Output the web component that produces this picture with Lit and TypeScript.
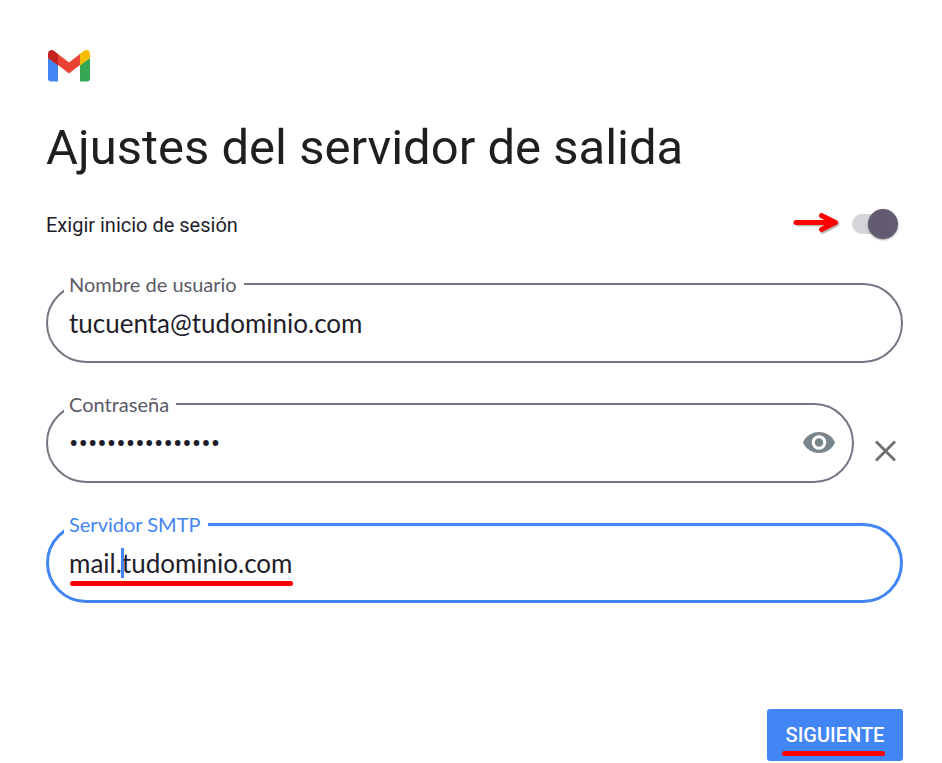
import { LitElement, html, css } from "lit";
import { customElement, property } from "lit/decorators.js";

@customElement("outlined-field")
class OutlinedField extends LitElement {
  @property() label = "";
  @property() value = "";
  @property() type = "text";
  @property({ type: Boolean, reflect: true }) active = false;

  static styles = css`
    :host {
      display: block;
      flex: 1;
      min-width: 0;
      position: relative;
    }
    .box {
      box-sizing: border-box;
      display: flex;
      align-items: center;
      height: 80px;
      padding: 0 16px 0 21px;
      border: 2px solid #797483;
      border-radius: 40px;
    }
    label {
      position: absolute;
      left: 18px;
      top: -11px;
      padding: 0 7px 0 5px;
      background: #fff;
      color: #5c5967;
      font: 20px/24px Lato, sans-serif;
    }
    input {
      flex: 1;
      min-width: 0;
      height: 48px;
      padding: 0;
      border: 0;
      outline: 0;
      background: none;
      color: #1f1d2b;
      font: 26px/32px Lato, sans-serif;
    }
    input[type="password"] {
      font: 28px/32px Roboto, sans-serif;
    }
    :host([active]) .box {
      border: 3px solid #4285f4;
      padding-left: 20px;
    }
    :host([active]) label {
      color: #4285f4;
    }
  `;

  render() {
    return html`
      <div class="box">
        <input id="control" type=${this.type} .value=${this.value} autocomplete="off" />
        <slot></slot>
      </div>
      <label for="control">${this.label}</label>
    `;
  }
}

@customElement("app-root")
class AppRoot extends LitElement {
  static styles = css`
    :host {
      display: block;
      background: #fff;
      color: #1f1f1f;
      font-family: Roboto, sans-serif;
    }
    main {
      padding: 47px 39px 0 46px;
    }
    .logo {
      display: block;
      width: 46px;
      height: 36px;
    }
    h1 {
      margin: 33px 0 0;
      font-size: 49px;
      line-height: 64px;
      font-weight: 400;
    }
    .require {
      display: flex;
      align-items: center;
      justify-content: space-between;
      height: 40px;
      margin-top: 25px;
      color: #1f1d2b;
      font-size: 20px;
    }
    .controls {
      display: flex;
      align-items: center;
      gap: 10px;
      padding-right: 5px;
    }
    .arrow {
      width: 50px;
      height: 28px;
    }
    .switch {
      appearance: none;
      position: relative;
      width: 46px;
      height: 32px;
      margin: 0;
    }
    .switch::before {
      content: "";
      position: absolute;
      inset: 5px 4px 7px 0;
      border-radius: 10px;
      background: #d5d4da;
    }
    .switch::after {
      content: "";
      position: absolute;
      right: 0;
      top: 0;
      width: 30px;
      height: 30px;
      border-radius: 50%;
      background: #625b71;
      box-shadow: 0 1px 2px rgba(0, 0, 0, 0.4);
    }
    .fields {
      display: grid;
      gap: 40px;
      margin-top: 38px;
    }
    .row {
      display: flex;
      align-items: center;
    }
    button {
      padding: 0;
      border: 0;
      background: none;
      cursor: pointer;
    }
    .eye,
    .clear,
    .eye svg,
    .clear svg {
      display: block;
      width: 34px;
      height: 34px;
    }
    .clear {
      margin: 16px 0 0 15px;
    }
    .smtp {
      position: relative;
    }
    .caret {
      position: absolute;
      left: 75px;
      top: 25px;
      width: 3px;
      height: 30px;
      background: #4285f4;
    }
    .mark {
      position: absolute;
      height: 5px;
      border-radius: 3px;
      background: #f00;
    }
    .smtp .mark {
      left: 24px;
      top: 58px;
      width: 223px;
    }
    footer {
      display: flex;
      justify-content: flex-end;
      margin-top: 106px;
    }
    .next {
      position: relative;
      width: 136px;
      height: 52px;
      border-radius: 3px;
      background: #4285f4;
      color: #fff;
      font: 500 20px/24px Roboto, sans-serif;
    }
    .next .mark {
      left: 15px;
      right: 18px;
      bottom: 5px;
    }
  `;

  render() {
    return html`
      <main>
        <svg class="logo" viewBox="0 0 46 36" role="img" aria-label="Gmail">
          <path fill="#4285f4" d="M2 11v20.500q0 3 3 3h7V18z" />
          <path fill="#34a853" d="M34 18v16.500h7q3 0 3-3V11z" />
          <path fill="#ea4335" d="M12 7l11 8.500L34 7v11l-11 8.500-11-8.500z" />
          <path fill="#fbbc04" d="M34 7l3-2.500C40 1.500 44 3 44 7v4l-10 7.500z" />
          <path fill="#c5221f" d="M12 7L9 4.500C6 1.500 2 3 2 7v4l10 7.500z" />
        </svg>
        <h1>Ajustes del servidor de salida</h1>
        <div class="require">
          <label for="login">Exigir inicio de sesión</label>
          <div class="controls">
            <svg class="arrow" viewBox="0 0 50 28" aria-hidden="true">
              <g fill="none" stroke-width="5" stroke-linecap="round" stroke-linejoin="round">
                <path stroke="#777" stroke-opacity="0.5" d="M5.500 13H44.500M30.500 5.500l14.500 7.500-14.500 7.500" />
                <path stroke="#f00" d="M4 11.500H43M29.500 4.500l14 7-14 7" />
              </g>
            </svg>
            <input class="switch" id="login" type="checkbox" role="switch" checked />
          </div>
        </div>
        <div class="fields">
          <div class="row">
            <outlined-field label="Nombre de usuario" value="tucuenta@tudominio.com"></outlined-field>
          </div>
          <div class="row">
            <outlined-field label="Contraseña" type="password" value="contrasena123456">
              <button class="eye" aria-label="Mostrar contraseña">
                <svg viewBox="0 0 34 34">
                  <path fill="#7b868c" d="M17 6C9.500 6 3.500 10.500 1 16.500c2.500 6 8.500 10.500 16 10.500s13.500-4.500 16-10.500C30.500 10.500 24.500 6 17 6z" />
                  <circle cx="17" cy="16.500" r="5.800" fill="#7b868c" stroke="#fff" stroke-width="3" />
                </svg>
              </button>
            </outlined-field>
            <button class="clear" aria-label="Borrar contraseña">
              <svg viewBox="0 0 34 34">
                <path fill="none" stroke="#6e6e6e" stroke-width="2.800" d="M7 7.500l19 19M26 7.500l-19 19" />
              </svg>
            </button>
          </div>
          <div class="row smtp">
            <outlined-field label="Servidor SMTP" value="mail.tudominio.com" active></outlined-field>
            <span class="caret"></span>
            <span class="mark"></span>
          </div>
        </div>
        <footer>
          <button class="next">SIGUIENTE<span class="mark"></span></button>
        </footer>
      </main>
    `;
  }
}
